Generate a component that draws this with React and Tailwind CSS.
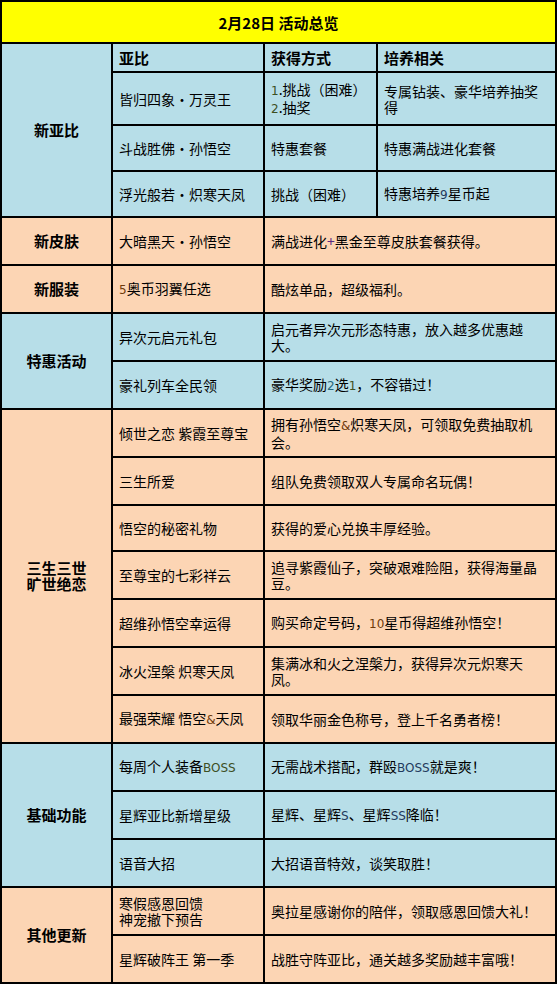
import React from "react";

const BLUE = "bg-[#b7dee8]";
const PEACH = "bg-[#fcd5b4]";

function Cell({ children, className = "", center = false, bold = false }) {
  return (
    <div
      className={
        "flex items-center whitespace-nowrap text-[14px] leading-[16px] text-black " +
        (center ? "justify-center text-center " : "pl-[6px] ") +
        (bold ? "font-bold " : "") +
        className
      }
    >
      <div>{children}</div>
    </div>
  );
}

function Lat({ children, c = "" }) {
  return <span className={"font-['DejaVu_Sans',sans-serif] text-[12px] " + c}>{children}</span>;
}

export default function App() {
  return (
    <div className="w-[558px] h-[985px] bg-white font-['Noto_Sans_CJK_SC','Noto_Sans',sans-serif]">
      <div className="grid w-[557px] bg-black gap-[2px] p-[2px] grid-cols-[109px_150px_111px_177px] grid-rows-[40px_27px_51px_44px_44px_46px_46px_46px_46px_46px_46px_44px_46px_46px_46px_46px_46px_46px_46px_46px_46px]">
        {/* Title */}
        <Cell center bold className="col-span-4 bg-[#ffff00] text-[15px] pt-[2px]">
          2月28日 活动总览
        </Cell>

        {/* 新亚比 */}
        <Cell center bold className={"row-span-4 text-[15px] " + BLUE}>新亚比</Cell>
        <Cell bold className={"text-[15px] " + BLUE}>亚比</Cell>
        <Cell bold className={"text-[15px] " + BLUE}>获得方式</Cell>
        <Cell bold className={"text-[15px] " + BLUE}>培养相关</Cell>

        <Cell className={BLUE}>皆归四象·万灵王</Cell>
        <Cell className={BLUE}>
          <Lat c="text-[#3d4f1f]">1</Lat>.挑战（困难）<br />
          <Lat c="text-[#3d4f1f]">2</Lat>.抽奖
        </Cell>
        <Cell className={BLUE}>
          专属钻装、豪华培养抽奖<br />得
        </Cell>

        <Cell className={BLUE}>斗战胜佛·孙悟空</Cell>
        <Cell className={BLUE}>特惠套餐</Cell>
        <Cell className={BLUE}>特惠满战进化套餐</Cell>

        <Cell className={BLUE}>浮光般若·炽寒天凤</Cell>
        <Cell className={BLUE}>挑战（困难）</Cell>
        <Cell className={BLUE}>
          特惠培养<Lat c="text-[#1f3a5d]">9</Lat>星币起
        </Cell>

        {/* 新皮肤 */}
        <Cell center bold className={"text-[15px] " + PEACH}>新皮肤</Cell>
        <Cell className={PEACH}>大暗黑天·孙悟空</Cell>
        <Cell className={"col-span-2 " + PEACH}>
          满战进化<span className="text-[#5a2780]">+</span>黑金至尊皮肤套餐获得。
        </Cell>

        {/* 新服装 */}
        <Cell center bold className={"text-[15px] " + PEACH}>新服装</Cell>
        <Cell className={PEACH}>
          <Lat c="text-[#6e3a0a]">5</Lat>奥币羽翼任选
        </Cell>
        <Cell className={"col-span-2 " + PEACH}>酷炫单品，超级福利。</Cell>

        {/* 特惠活动 */}
        <Cell center bold className={"row-span-2 text-[15px] " + BLUE}>特惠活动</Cell>
        <Cell className={BLUE}>异次元启元礼包</Cell>
        <Cell className={"col-span-2 " + BLUE}>
          启元者异次元形态特惠，放入越多优惠越<br />大。
        </Cell>
        <Cell className={BLUE}>豪礼列车全民领</Cell>
        <Cell className={"col-span-2 " + BLUE}>
          豪华奖励<Lat c="text-[#25667a]">2</Lat>选<Lat c="text-[#3d4f1f]">1</Lat>，不容错过！
        </Cell>

        {/* 三生三世 */}
        <Cell center bold className={"row-span-7 text-[15px] " + PEACH}>
          三生三世<br />旷世绝恋
        </Cell>
        <Cell className={PEACH}>倾世之恋 紫霞至尊宝</Cell>
        <Cell className={"col-span-2 " + PEACH}>
          拥有孙悟空<Lat c="text-[#6e3a0a]">&amp;</Lat>炽寒天凤，可领取免费抽取机<br />会。
        </Cell>
        <Cell className={PEACH}>三生所爱</Cell>
        <Cell className={"col-span-2 " + PEACH}>组队免费领取双人专属命名玩偶！</Cell>
        <Cell className={PEACH}>悟空的秘密礼物</Cell>
        <Cell className={"col-span-2 " + PEACH}>获得的爱心兑换丰厚经验。</Cell>
        <Cell className={PEACH}>至尊宝的七彩祥云</Cell>
        <Cell className={"col-span-2 " + PEACH}>
          追寻紫霞仙子，突破艰难险阻，获得海量晶<br />豆。
        </Cell>
        <Cell className={PEACH}>超维孙悟空幸运得</Cell>
        <Cell className={"col-span-2 " + PEACH}>
          购买命定号码，<Lat c="text-[#6e3a0a]">10</Lat>星币得超维孙悟空！
        </Cell>
        <Cell className={PEACH}>冰火涅槃 炽寒天凤</Cell>
        <Cell className={"col-span-2 " + PEACH}>
          集满冰和火之涅槃力，获得异次元炽寒天<br />凤。
        </Cell>
        <Cell className={PEACH}>
          最强荣耀 悟空<Lat c="text-[#6e3a0a]">&amp;</Lat>天凤
        </Cell>
        <Cell className={"col-span-2 " + PEACH}>领取华丽金色称号，登上千名勇者榜！</Cell>

        {/* 基础功能 */}
        <Cell center bold className={"row-span-3 text-[15px] " + BLUE}>基础功能</Cell>
        <Cell className={BLUE}>
          每周个人装备<Lat c="text-[#3d4f1f]">BOSS</Lat>
        </Cell>
        <Cell className={"col-span-2 " + BLUE}>
          无需战术搭配，群殴<Lat c="text-[#1f3a5d]">BOSS</Lat>就是爽！
        </Cell>
        <Cell className={BLUE}>星辉亚比新增星级</Cell>
        <Cell className={"col-span-2 " + BLUE}>
          星辉、星辉<Lat c="text-[#1f3a5d]">S</Lat>、星辉<Lat c="text-[#1f3a5d]">SS</Lat>降临！
        </Cell>
        <Cell className={BLUE}>语音大招</Cell>
        <Cell className={"col-span-2 " + BLUE}>大招语音特效，谈笑取胜！</Cell>

        {/* 其他更新 */}
        <Cell center bold className={"row-span-2 text-[15px] " + PEACH}>其他更新</Cell>
        <Cell className={PEACH}>
          寒假感恩回馈<br />神宠撤下预告
        </Cell>
        <Cell className={"col-span-2 " + PEACH}>奥拉星感谢你的陪伴，领取感恩回馈大礼！</Cell>
        <Cell className={PEACH}>星辉破阵王 第一季</Cell>
        <Cell className={"col-span-2 " + PEACH}>战胜守阵亚比，通关越多奖励越丰富哦！</Cell>
      </div>
    </div>
  );
}
